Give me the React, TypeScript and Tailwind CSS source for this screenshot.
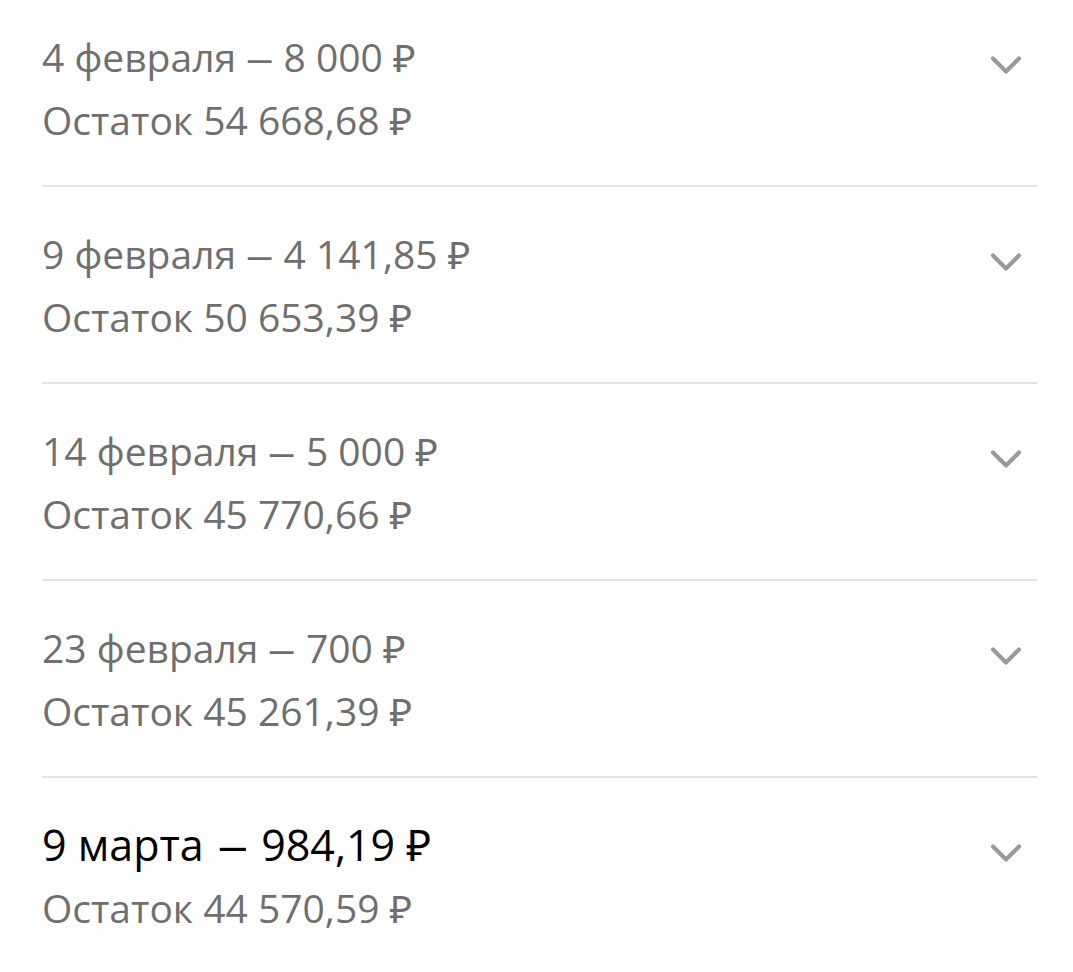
import { ChevronDown } from 'lucide-react';

interface Payment {
  date: string;
  amount: string;
  rest: string;
  current?: boolean;
}

const payments: Payment[] = [
  { date: '4 февраля', amount: '8 000 ₽', rest: '54 668,68 ₽' },
  { date: '9 февраля', amount: '4 141,85 ₽', rest: '50 653,39 ₽' },
  { date: '14 февраля', amount: '5 000 ₽', rest: '45 770,66 ₽' },
  { date: '23 февраля', amount: '700 ₽', rest: '45 261,39 ₽' },
  { date: '9 марта', amount: '984,19 ₽', rest: '44 570,59 ₽', current: true },
];

export default function App() {
  return (
    <div
      className="min-h-screen bg-white pl-[42px] pr-[36px]"
      style={{ fontFamily: '"Open Sans", "Noto Sans", sans-serif' }}
    >
      {payments.map((p, i) => (
        <PaymentRow key={i} payment={p} first={i === 0} last={i === payments.length - 1} />
      ))}
    </div>
  );
}

function PaymentRow({ payment, first, last }: { payment: Payment; first: boolean; last: boolean }) {
  const titleCls = payment.current ? 'text-[43px] text-black' : 'text-[39px] text-[#6f6f6f]';
  const dashCls = payment.current ? 'mx-[18px]' : 'mx-[14px]';

  return (
    <div className={`${first ? 'pt-[33px]' : 'pt-[43px]'} ${last ? 'pb-[30px]' : 'pb-[41px] border-b-2 border-[#e3e3e3]'}`}>
      <div className="flex h-[48px] items-start justify-between">
        <div className={`h-[48px] whitespace-nowrap leading-[48px] ${titleCls}`}>
          {payment.date}
          <span className={`inline-block h-[48px] scale-x-[1.45] align-top ${dashCls}`}>–</span>
          {payment.amount}
        </div>
        <ChevronDown className="mt-[6px] mr-[5px] h-[52px] w-[52px] text-[#9a9a9a]" strokeWidth={1.9} />
      </div>
      <div className="mt-[15px] h-[48px] whitespace-nowrap text-[39px] leading-[48px] text-[#6f6f6f]">
        Остаток {payment.rest}
      </div>
    </div>
  );
}
